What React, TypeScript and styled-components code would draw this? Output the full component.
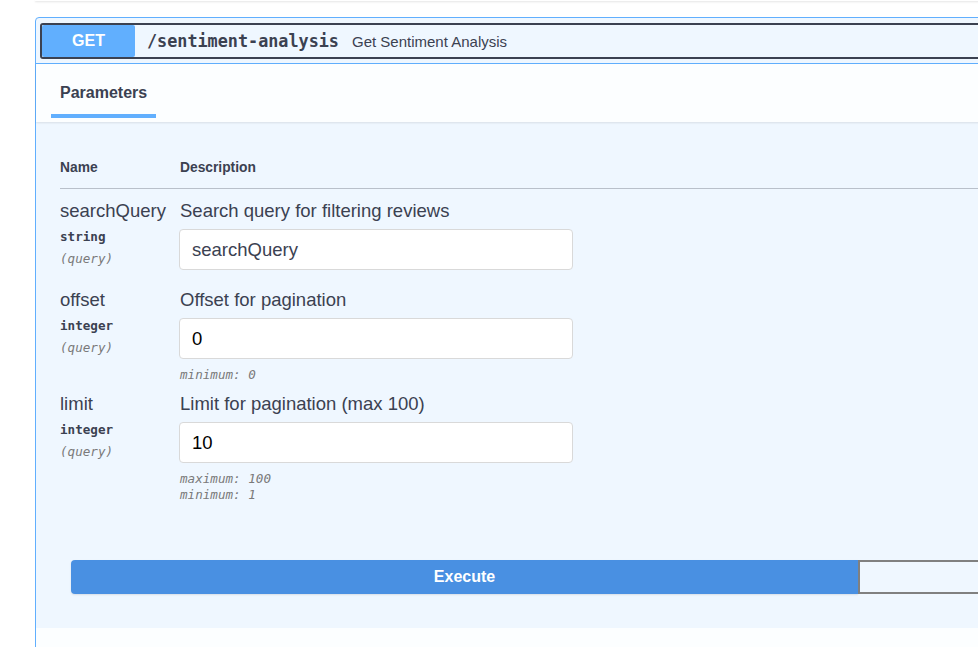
import styled, {createGlobalStyle} from 'styled-components';

const GlobalStyle = createGlobalStyle`
    html, body {
        margin: 0;
        padding: 0;
        background: #fff;
        overflow: hidden;
    }
    body {
        font-family: "Liberation Sans", Arial, sans-serif;
        color: #3b4151;
    }
`;

const Page = styled.div`
    width: 978px;
    height: 647px;
    overflow: hidden;
    position: relative;
`;

const PrevShadow = styled.div`
    margin-left: 35px;
    width: 1700px;
    height: 1px;
    box-shadow: 0 1px 2px rgba(0, 0, 0, 0.15);
`;

const OpBlock = styled.div`
    margin: 16px 0 0 35px;
    width: 1700px;
    border: 1px solid #61affe;
    border-radius: 4px 0 0 0;
    background: #eff7ff;
`;

const Summary = styled.div`
    padding: 5px 5px 4px 4px;
    border-bottom: 1px solid #61affe;
`;

const SummaryBar = styled.div`
    display: flex;
    align-items: center;
    height: 32px;
    border: 2px solid #3b4151;
    border-radius: 3px;
`;

const Method = styled.div`
    width: 93px;
    height: 100%;
    background: #61affe;
    color: #fff;
    font-weight: bold;
    font-size: 16px;
    display: flex;
    align-items: center;
    justify-content: center;
    border-radius: 2px;
`;

const Path = styled.span`
    margin-left: 12px;
    font-family: "DejaVu Sans Mono", monospace;
    font-weight: bold;
    font-size: 16.8px;
    color: #3b4151;
`;

const SummaryText = styled.span`
    margin-left: 13px;
    font-size: 15px;
    color: #3b4151;
`;

const SectionHeader = styled.div`
    height: 58px;
    background: rgba(255, 255, 255, 0.8);
    box-shadow: 0 1px 2px rgba(0, 0, 0, 0.1);
    padding-left: 15px;
    display: flex;
    align-items: stretch;
`;

const Tab = styled.div`
    padding: 0 9px;
    display: flex;
    align-items: center;
    font-weight: bold;
    font-size: 16px;
    color: #3b4151;
    position: relative;
    &::after {
        content: '';
        position: absolute;
        left: 0;
        right: 0;
        bottom: 4px;
        height: 4px;
        background: #61affe;
    }
`;

const Body = styled.div`
    padding: 38px 0 34px 24px;
`;

const Table = styled.div`
    display: flex;
    flex-direction: column;
`;

const HeadRow = styled.div`
    display: grid;
    grid-template-columns: 120px 1fr;
    padding-bottom: 12px;
    border-bottom: 1px solid rgba(59, 65, 81, 0.3);
    font-weight: bold;
    font-size: 13.8px;
    line-height: 16px;
`;

const Row = styled.div`
    display: grid;
    grid-template-columns: 120px 1fr;
    margin-top: 11px;
`;

const NameCol = styled.div`
    display: flex;
    flex-direction: column;
`;

const ParamName = styled.div`
    font-size: 18.5px;
    line-height: 22px;
`;

const ParamType = styled.div`
    margin-top: 7px;
    font-family: "DejaVu Sans Mono", monospace;
    font-weight: 600;
    font-size: 12.6px;
    line-height: 16px;
`;

const ParamIn = styled.div`
    margin-top: 6px;
    font-family: "DejaVu Sans Mono", monospace;
    font-style: italic;
    font-size: 12.6px;
    line-height: 16px;
    color: #7a7a7a;
`;

const DescCol = styled.div`
    display: flex;
    flex-direction: column;
    align-items: flex-start;
`;

const Desc = styled.div`
    font-size: 18.5px;
    line-height: 22px;
`;

const Input = styled.input`
    margin: 7px 0 8px -1px;
    box-sizing: border-box;
    width: 394px;
    height: 41px;
    padding: 0 12px;
    border: 1px solid #d9d9d9;
    border-radius: 4px;
    background: #fff;
    font-family: "Liberation Sans", Arial, sans-serif;
    font-size: 18.5px;
    color: #000;
    outline: none;
    &::placeholder {
        color: #3b4151;
    }
`;

const Constraint = styled.div`
    font-family: "DejaVu Sans Mono", monospace;
    font-style: italic;
    font-size: 12.6px;
    line-height: 15px;
    color: #7a7a7a;
    & + & {
        margin-top: 1px;
    }
`;

const BtnGroup = styled.div`
    display: flex;
    margin: 58px 0 0 11px;
`;

const Btn = styled.button<{primary?: boolean}>`
    width: 787px;
    height: 34px;
    box-sizing: border-box;
    border: ${p => p.primary ? 'none' : '2px solid #808080'};
    border-radius: ${p => p.primary ? '4px 0 0 4px' : '0 4px 4px 0'};
    background: ${p => p.primary ? '#4990e2' : 'transparent'};
    box-shadow: ${p => p.primary ? '0 1px 2px rgba(0, 0, 0, 0.1)' : 'none'};
    color: #fff;
    font-family: "Liberation Sans", Arial, sans-serif;
    font-weight: bold;
    font-size: 16px;
`;

const ResponsesHeader = styled.div`
    height: 40px;
    background: rgba(255, 255, 255, 0.8);
`;

type Param = {
    name: string;
    type: string;
    desc: string;
    value?: string;
    placeholder?: string;
    constraints: string[];
};

const params: Param[] = [
    {name: 'searchQuery', type: 'string', desc: 'Search query for filtering reviews', placeholder: 'searchQuery', constraints: []},
    {name: 'offset', type: 'integer', desc: 'Offset for pagination', value: '0', constraints: ['minimum: 0']},
    {name: 'limit', type: 'integer', desc: 'Limit for pagination (max 100)', value: '10', constraints: ['maximum: 100', 'minimum: 1']},
];

const App = () => {
    return <Page>
        <GlobalStyle />
        <PrevShadow />
        <OpBlock>
            <Summary>
                <SummaryBar>
                    <Method>GET</Method>
                    <Path>/sentiment-analysis</Path>
                    <SummaryText>Get Sentiment Analysis</SummaryText>
                </SummaryBar>
            </Summary>
            <SectionHeader>
                <Tab>Parameters</Tab>
            </SectionHeader>
            <Body>
                <Table>
                    <HeadRow>
                        <div>Name</div>
                        <div>Description</div>
                    </HeadRow>
                    {params.map(p => (
                        <Row key={p.name}>
                            <NameCol>
                                <ParamName>{p.name}</ParamName>
                                <ParamType>{p.type}</ParamType>
                                <ParamIn>(query)</ParamIn>
                            </NameCol>
                            <DescCol>
                                <Desc>{p.desc}</Desc>
                                <Input defaultValue={p.value} placeholder={p.placeholder} />
                                {p.constraints.map(c => <Constraint key={c}>{c}</Constraint>)}
                            </DescCol>
                        </Row>
                    ))}
                </Table>
                <BtnGroup>
                    <Btn primary>Execute</Btn>
                    <Btn />
                </BtnGroup>
            </Body>
            <ResponsesHeader />
        </OpBlock>
    </Page>;
};

export default App;
